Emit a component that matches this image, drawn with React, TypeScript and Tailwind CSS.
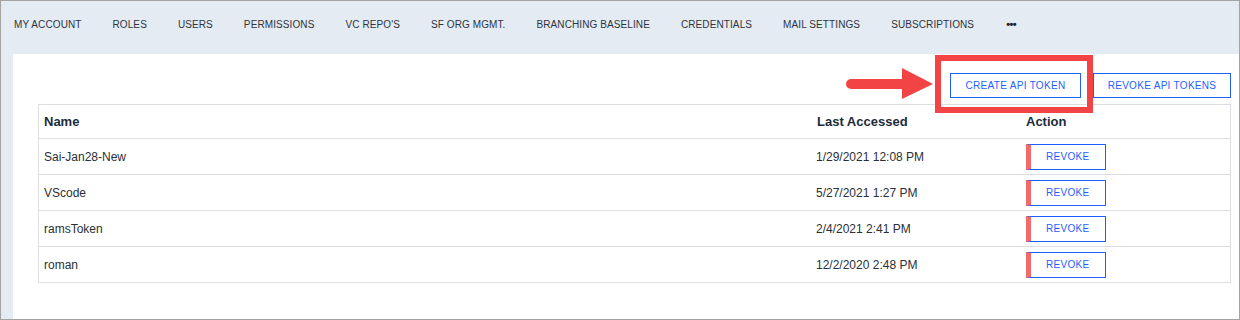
const navItems = [
  "MY ACCOUNT",
  "ROLES",
  "USERS",
  "PERMISSIONS",
  "VC REPO'S",
  "SF ORG MGMT.",
  "BRANCHING BASELINE",
  "CREDENTIALS",
  "MAIL SETTINGS",
  "SUBSCRIPTIONS",
];

const tokens = [
  { name: "Sai-Jan28-New", accessed: "1/29/2021 12:08 PM" },
  { name: "VScode", accessed: "5/27/2021 1:27 PM" },
  { name: "ramsToken", accessed: "2/4/2021 2:41 PM" },
  { name: "roman", accessed: "12/2/2020 2:48 PM" },
];

function RevokeButton() {
  return (
    <button className="flex h-[26px] w-[80px] items-center border border-[#1f5eff] border-l-[5px] border-l-[#f26b6b] bg-white pl-[15px] text-[10px] tracking-[0.3px] text-[#1f5eff]">
      REVOKE
    </button>
  );
}

export default function App() {
  return (
    <div
      className="flex h-[320px] w-[1240px] flex-col border border-[#a3a3a3] bg-[#e4ebf2] text-[#2b2f36]"
      style={{ fontFamily: '"Liberation Sans", Arial, sans-serif' }}
    >
      <nav className="flex h-[53px] items-center gap-[31px] pl-[13px] pb-[6px] text-[10px] tracking-[0.1px] text-[#2e3440]">
        {navItems.map((item) => (
          <span key={item}>{item}</span>
        ))}
        <span className="ml-[1px] text-[11px] font-bold tracking-[-0.5px] text-[#1d2230]">•••</span>
      </nav>

      <div className="relative ml-[12px] flex flex-1 flex-col bg-white pl-[25px] pr-[8px] pt-[19px]">
        <div className="flex justify-end gap-[12px]">
          <button className="h-[25px] w-[131px] border border-[#1f5eff] text-[10px] tracking-[0.3px] text-[#1f5eff]">
            CREATE API TOKEN
          </button>
          <button className="h-[25px] w-[138px] border border-[#1f5eff] text-[10px] tracking-[0.3px] text-[#1f5eff]">
            REVOKE API TOKENS
          </button>
        </div>

        {/* highlight box and arrow from the doc screenshot */}
        <div className="absolute left-[922px] top-[1px] h-[58px] w-[158px] border-[6px] border-[#f24444]" />
        <svg
          className="absolute left-[832px] top-[14px]"
          width="90"
          height="34"
          viewBox="0 0 90 34"
        >
          <rect x="1" y="11" width="62" height="10" rx="5" fill="#f24444" />
          <polygon points="57,0 88,16 57,31" fill="#f24444" />
        </svg>

        <div className="mt-[6px] border border-[#dcdde2]">
          <div className="grid h-[33px] grid-cols-[772px_209px_1fr] items-center text-[13px] font-bold text-[#1e2b3a]">
            <div className="pl-[5px]">Name</div>
            <div className="pl-[6px]">Last Accessed</div>
            <div className="pl-[6px]">Action</div>
          </div>
          {tokens.map((t) => (
            <div
              key={t.name}
              className="grid h-[36px] grid-cols-[772px_209px_1fr] items-center border-t border-[#dcdde2] text-[12px] text-[#2b2f36]"
            >
              <div className="pl-[5px]">{t.name}</div>
              <div className="pl-[5px]">{t.accessed}</div>
              <div className="pl-[6px]">
                <RevokeButton />
              </div>
            </div>
          ))}
        </div>
      </div>
    </div>
  );
}
